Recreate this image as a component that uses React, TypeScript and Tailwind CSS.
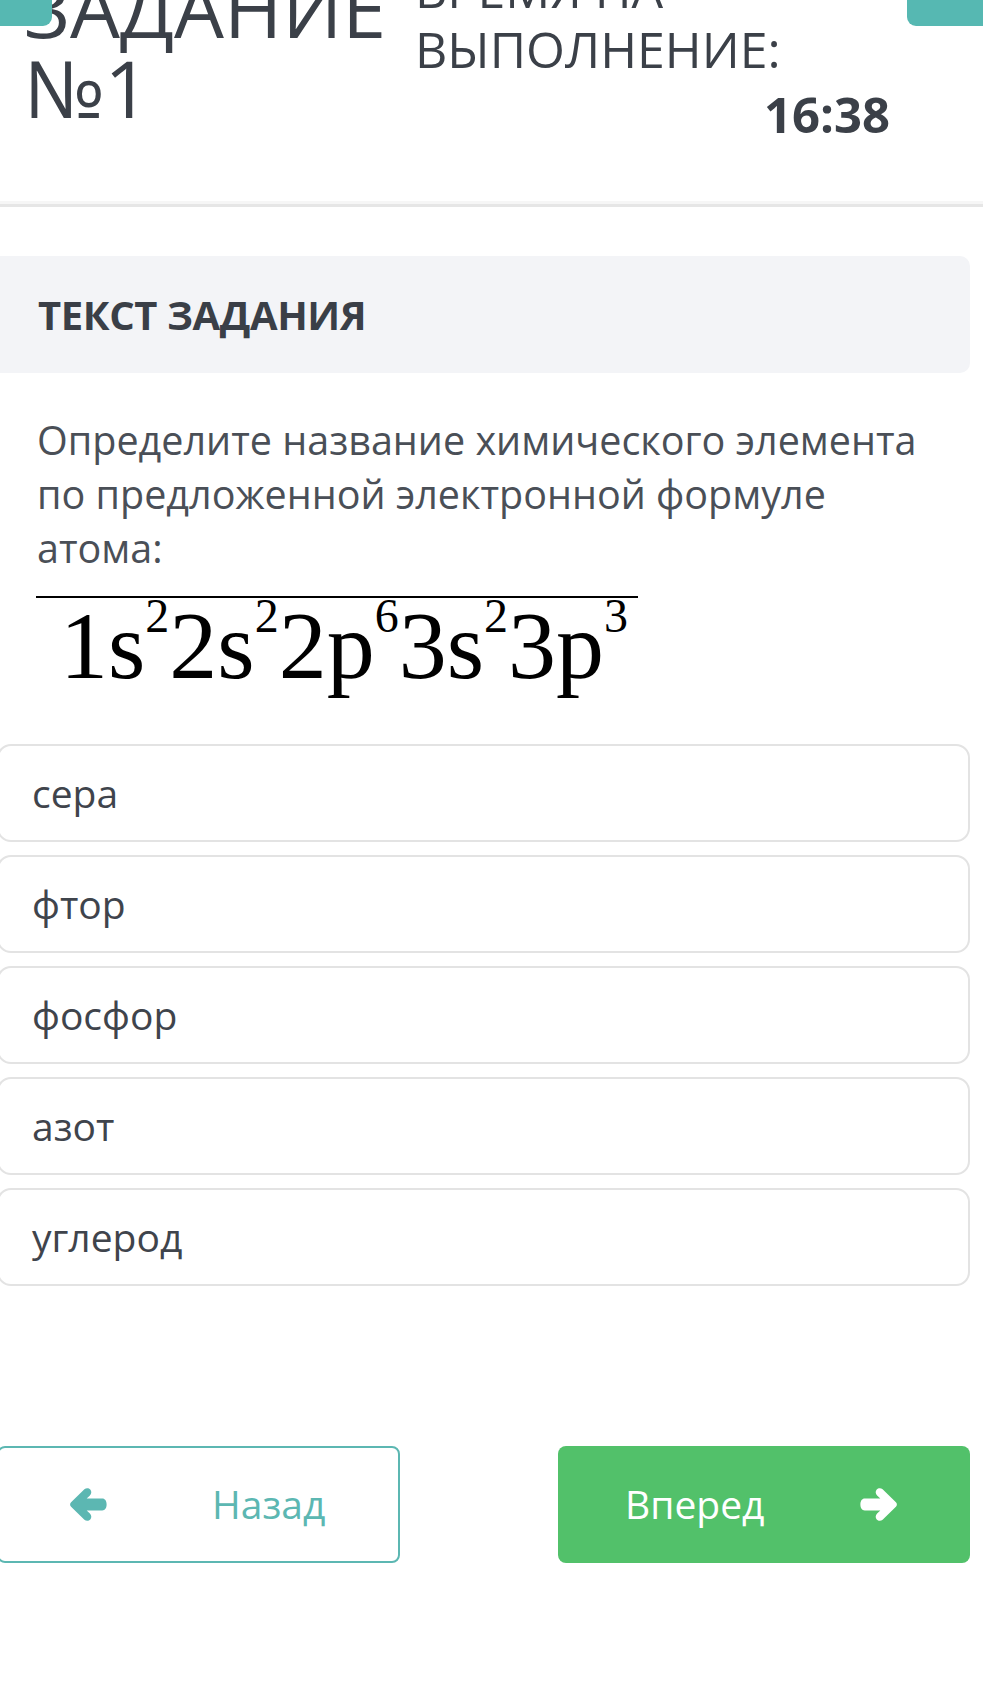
import React from "react";

const ArrowLeft = ({ className }: { className?: string }) => (
  <svg viewBox="0 0 40 36" className={className} fill="currentColor">
    <path d="M2.2 15.6 L16.2 2.0 C18 0.3 20.8 0.4 22.4 2.2 C24 4.0 23.8 6.8 22 8.5 L18.6 11.8 L35 11.8 C37.8 11.8 39.6 14.2 39.6 18 C39.6 21.8 37.8 24.2 35 24.2 L18.6 24.2 L22 27.5 C23.8 29.2 24 32 22.4 33.8 C20.8 35.6 18 35.7 16.2 34 L2.2 20.4 C0.8 19.1 0.8 16.9 2.2 15.6 Z" />
  </svg>
);

const ArrowRight = ({ className }: { className?: string }) => (
  <svg viewBox="0 0 40 36" className={className} fill="currentColor">
    <path d="M37.8 15.6 L23.8 2.0 C22 0.3 19.2 0.4 17.6 2.2 C16 4.0 16.2 6.8 18 8.5 L21.4 11.8 L5 11.8 C2.2 11.8 0.4 14.2 0.4 18 C0.4 21.8 2.2 24.2 5 24.2 L21.4 24.2 L18 27.5 C16.2 29.2 16 32 17.6 33.8 C19.2 35.6 22 35.7 23.8 34 L37.8 20.4 C39.2 19.1 39.2 16.9 37.8 15.6 Z" />
  </svg>
);

const options = ["сера", "фтор", "фосфор", "азот", "углерод"];

export default function App() {
  const font = { fontFamily: '"Open Sans", "Noto Sans", sans-serif' };
  return (
    <div
      className="relative w-[983px] h-[1684px] overflow-hidden bg-white text-[#3d424a]"
      style={font}
    >
      {/* top teal tabs */}
      <div className="absolute left-0 top-0 w-[52px] h-[26px] bg-[#56b8b2] rounded-br-[9px] z-10" />
      <div className="absolute right-0 top-0 w-[76px] h-[26px] bg-[#56b8b2] rounded-bl-[9px] z-10" />

      {/* header */}
      <div className="flex h-[207px] border-b-[3px] border-[#e6e6e6] shadow-[0_-3px_0_#f6f6f6_inset]">
        <div className="w-[390px] pl-[24px] -mt-[32px] text-[79px] leading-[80px] text-[#3b4048] whitespace-nowrap">
          ЗАДАНИЕ
          <br />
          №1
        </div>
        <div className="flex flex-col w-[500px] -mt-[41px]">
          <div className="pl-[25px] text-[50px] leading-[60px] text-[#3b4048] whitespace-nowrap">
            ВРЕМЯ НА
            <br />
            ВЫПОЛНЕНИЕ:
          </div>
          <div className="mt-[5px] text-right text-[49px] leading-[60px] font-bold text-[#3b4048]">
            16:38
          </div>
        </div>
      </div>

      {/* task title box */}
      <div className="mt-[49px] mr-[13px] h-[117px] bg-[#f3f4f7] rounded-r-[10px] flex items-center pl-[38px]">
        <span className="text-[40px] font-bold text-[#3a3f47] tracking-[-0.4px]">
          ТЕКСТ ЗАДАНИЯ
        </span>
      </div>

      {/* question */}
      <div className="pl-[37px] pr-[40px] mt-[40px] text-[39.5px] leading-[54px] text-[#4a4f57]">
        Определите название химического элемента по предложенной электронной формуле атома:
      </div>

      {/* formula */}
      <div
        className="ml-[36px] mt-[21px] w-[602px] border-t-[2px] border-black pl-[24px] text-[96px] leading-none text-black"
        style={{ fontFamily: '"Liberation Serif", "Times New Roman", serif' }}
      >
        1s<sup className="text-[48px] leading-none top-[-46px]">2</sup>2s
        <sup className="text-[48px] leading-none top-[-46px]">2</sup>2p
        <sup className="text-[48px] leading-none top-[-46px]">6</sup>3s
        <sup className="text-[48px] leading-none top-[-46px]">2</sup>3p
        <sup className="text-[48px] leading-none top-[-46px]">3</sup>
      </div>

      {/* options */}
      <div className="mt-[50px] -ml-[3px] w-[973px] flex flex-col gap-[13px]">
        {options.map((o) => (
          <div
            key={o}
            className="h-[98px] border-[2px] border-[#e3e3e3] rounded-[14px] flex items-center pl-[33px] text-[39px] text-[#3f444c]"
          >
            {o}
          </div>
        ))}
      </div>

      {/* buttons */}
      <div className="mt-[160px] flex justify-between -ml-[3px] w-[973px]">
        <button className="w-[403px] h-[117px] border-[2px] border-[#5cb7b2] rounded-[8px] flex items-center pl-[70px] text-[#5cb7b2] bg-white">
          <ArrowLeft className="w-[38px] h-[35px]" />
          <span className="ml-[105px] text-[39px]">Назад</span>
        </button>
        <button className="w-[412px] h-[117px] bg-[#52c16a] rounded-[8px] flex items-center pl-[67px] text-white">
          <span className="text-[39px]">Вперед</span>
          <ArrowRight className="ml-[96px] w-[38px] h-[35px]" />
        </button>
      </div>
    </div>
  );
}
